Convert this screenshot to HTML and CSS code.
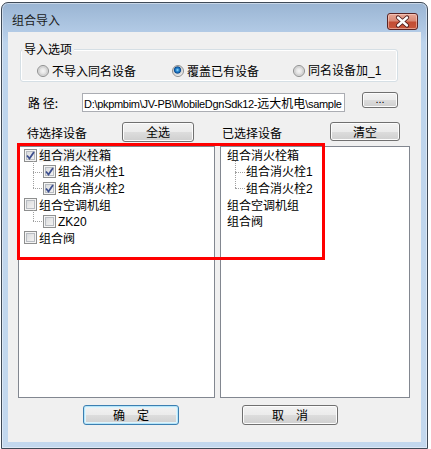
FILE: index.html
```html
<!DOCTYPE html>
<html lang="zh">
<head>
<meta charset="utf-8">
<title>组合导入</title>
<link rel="stylesheet" href="styles.css">
</head>
<body>
<div class="window">
  <div class="titlebar">
    <span class="title">组合导入</span>
    <span class="close">
      <svg width="31" height="17" viewBox="0 0 31 17">
        <path d="M11 4.5 L20 12.5 M20 4.5 L11 12.5" stroke="#4a1a1a" stroke-width="4.2" stroke-linecap="round"/>
        <path d="M11 4.5 L20 12.5 M20 4.5 L11 12.5" stroke="#ffffff" stroke-width="2.4" stroke-linecap="round"/>
      </svg>
    </span>
  </div>
  <div class="client">
    <div class="group">
      <div class="legend">导入选项</div>
      <div class="radios">
        <label class="radio"><span class="rb"></span><span>不导入同名设备</span></label>
        <label class="radio"><span class="rb on"></span><span>覆盖已有设备</span></label>
        <label class="radio"><span class="rb"></span><span>同名设备加<span class="num">_1</span></span></label>
      </div>
    </div>

    <div class="path-row">
      <span class="path-label">路 径:</span>
      <div class="path-field">D:\pkpmbim\JV-PB\MobileDgnSdk12-<span class="cjk">远大机电</span>\sample</div>
      <button class="btn dots">...</button>
    </div>

    <div class="lists">
      <div class="col col-left">
        <div class="col-head">
          <span class="head-label">待选择设备</span>
          <button class="btn btn-all">全选</button>
        </div>
        <div class="listbox tree-left">
          <div class="row"><span class="cb"><svg viewBox="0 0 13 13" width="13" height="13"><path d="M3 6.5 L5.5 9.5 L10 3" fill="none" stroke="#3d4f8f" stroke-width="1.8"/></svg></span><span class="txt hl">组合消火栓箱</span></div>
          <div class="row child"><span class="conn"></span><span class="cb"><svg viewBox="0 0 13 13" width="13" height="13"><path d="M3 6.5 L5.5 9.5 L10 3" fill="none" stroke="#3d4f8f" stroke-width="1.8"/></svg></span><span class="txt">组合消火栓<span class="num">1</span></span></div>
          <div class="row child last"><span class="conn"></span><span class="cb"><svg viewBox="0 0 13 13" width="13" height="13"><path d="M3 6.5 L5.5 9.5 L10 3" fill="none" stroke="#3d4f8f" stroke-width="1.8"/></svg></span><span class="txt">组合消火栓<span class="num">2</span></span></div>
          <div class="row"><span class="cb"></span><span class="txt">组合空调机组</span></div>
          <div class="row child last"><span class="conn"></span><span class="cb"></span><span class="txt"><span class="num">ZK20</span></span></div>
          <div class="row"><span class="cb"></span><span class="txt">组合阀</span></div>
        </div>
      </div>
      <div class="col col-right">
        <div class="col-head">
          <span class="head-label">已选择设备</span>
          <button class="btn btn-clear">清空</button>
        </div>
        <div class="listbox tree-right">
          <div class="row"><span class="txt">组合消火栓箱</span></div>
          <div class="row child"><span class="conn"></span><span class="txt">组合消火栓<span class="num">1</span></span></div>
          <div class="row child last"><span class="conn"></span><span class="txt">组合消火栓<span class="num">2</span></span></div>
          <div class="row"><span class="txt">组合空调机组</span></div>
          <div class="row"><span class="txt">组合阀</span></div>
        </div>
      </div>
    </div>

    <div class="red-mark"></div>

    <div class="footer">
      <button class="btn btn-ok">确　定</button>
      <button class="btn btn-cancel">取　消</button>
    </div>
  </div>
</div>
</body>
</html>
```

FILE: styles.css
```css
* { box-sizing: border-box; }

html, body {
  margin: 0;
  padding: 0;
  background: #ffffff;
}

body {
  font-family: "Noto Sans CJK SC", "Liberation Sans", sans-serif;
  font-size: 12px;
  color: #000;
  overflow: hidden;
}

.window {
  margin: 2px 0 0 1px;
  width: 427px;
  height: 447px;
  border: 1px solid #3f4a57;
  border-radius: 7px 7px 0 0;
  background: linear-gradient(to bottom, #9ab5d3 0px, #b3cbe6 30px, #bdd4ec 40px, #c3d8ee 100%);
  box-shadow: inset 0 0 0 1px rgba(255, 255, 255, 0.45);
  display: flex;
  flex-direction: column;
  padding: 0 6px 6px 6px;
}

.titlebar {
  height: 29px;
  display: flex;
  align-items: flex-start;
  justify-content: space-between;
  padding: 10px 3px 0 4px;
}

.title {
  line-height: 14px;
  font-size: 12px;
  color: #1b1b1b;
}

.close {
  display: block;
  width: 31px;
  height: 17px;
  border: 1px solid #5a2424;
  border-radius: 3px;
  background: linear-gradient(to bottom, #e8a796 0%, #d98a76 45%, #c24c33 55%, #c9573c 100%);
  box-shadow: inset 0 0 0 1px rgba(255, 220, 210, 0.5);
  position: relative;
}

.close svg {
  display: block;
  margin: -1px 0 0 -1px;
}

.client {
  flex: 1;
  background: #f0f0f0;
  position: relative;
  display: flex;
  flex-direction: column;
}

/* group box */
.group {
  margin: 17px 0 0 12px;
  width: 378px;
  height: 33px;
  border: 1px solid #d5dfe5;
  border-radius: 3px;
  box-shadow: inset 0 0 0 1px #ffffff;
}

.legend {
  margin: -8px 0 0 1px;
  padding: 0 2px;
  width: fit-content;
  background: #f0f0f0;
  line-height: 14px;
}

.radios {
  display: grid;
  grid-template-columns: 135px 121px auto;
  padding-left: 16px;
  margin-top: 7px;
  height: 14px;
}

.radio {
  display: flex;
  align-items: center;
  gap: 3px;
  line-height: 14px;
}

.rb {
  width: 12px;
  height: 12px;
  border-radius: 50%;
  border: 1px solid #8e8f8f;
  background: radial-gradient(circle at 50% 50%, #f6f6f6 0px, #e2e2e2 3px, #cfcfcf 4px, #f4f4f4 6px);
  flex: none;
}

.rb.on {
  background: radial-gradient(circle at 45% 40%, #a8e2ff 0px, #2c8ed6 1.5px, #0b4c93 3.2px, #cfcfcf 4px, #f4f4f4 6px);
}

.num {
  font-family: "Liberation Sans", sans-serif;
}

/* path row */
.path-row {
  display: flex;
  align-items: flex-start;
  margin: 11px 0 0 20px;
  height: 19px;
}

.path-label {
  width: 54px;
  line-height: 19px;
}

.path-field {
  width: 263px;
  height: 19px;
  border: 1px solid #abadb3;
  background: #fff;
  padding: 0 0 0 1px;
  line-height: 17px;
  font-family: "Liberation Sans", "Noto Sans CJK SC", sans-serif;
  font-size: 11px;
  white-space: nowrap;
  overflow: hidden;
  letter-spacing: -0.3px;
}

.path-field .cjk {
  font-family: "Noto Sans CJK SC", sans-serif;
  font-size: 12px;
  letter-spacing: 0;
}

.btn {
  font-family: "Noto Sans CJK SC", "Liberation Sans", sans-serif;
  font-size: 12px;
  color: #000;
  border: 1px solid #707070;
  border-radius: 3px;
  background: linear-gradient(to bottom, #f2f2f2 0%, #ebebeb 50%, #dddddd 50%, #cfcfcf 100%);
  box-shadow: inset 0 0 0 1px #fcfcfc;
  padding: 0;
  line-height: 16px;
  display: flex;
  align-items: center;
  justify-content: center;
}

.dots {
  width: 36px;
  height: 16px;
  margin: -1px 0 0 17px;
  line-height: 12px;
  font-family: "Liberation Sans", sans-serif;
  font-size: 11px;
  align-items: flex-end;
  padding-bottom: 2px;
}

/* lists */
.lists {
  display: grid;
  grid-template-columns: 197px 190px;
  column-gap: 5px;
  margin: 10px 0 0 10px;
}

.col {
  display: flex;
  flex-direction: column;
}

.col-head {
  height: 20px;
  display: flex;
  align-items: center;
}

.col-left .head-label {
  margin-left: 9px;
  width: 95px;
}

.col-right .head-label {
  margin-left: 2px;
  width: 108px;
}

.btn-all {
  width: 72px;
  height: 20px;
}

.btn-clear {
  width: 70px;
  height: 19px;
  align-self: flex-start;
}

.listbox {
  margin-top: 4px;
  height: 252px;
  border: 1px solid #828790;
  background: #fff;
}

.tree-left { padding: 0 0 0 5px; }
.tree-right { padding: 0 0 0 6px; }

.row {
  height: 16.5px;
  display: flex;
  align-items: center;
  line-height: 14px;
}

.row.child {
  padding-left: 9px;
}

.tree-right .row.child {
  padding-left: 8px;
}

.conn {
  width: 10px;
  height: 100%;
  position: relative;
  flex: none;
}

.tree-right .conn {
  width: 11px;
}

.conn::before {
  content: "";
  position: absolute;
  left: 0;
  top: -3px;
  bottom: 0;
  border-left: 1px dotted #a0a0a0;
}

.row.last .conn::before {
  bottom: 50%;
}

.conn::after {
  content: "";
  position: absolute;
  left: 0;
  right: 1px;
  top: 50%;
  border-top: 1px dotted #a0a0a0;
}

.cb {
  width: 13px;
  height: 13px;
  border: 1px solid #8e8f8f;
  background: linear-gradient(135deg, #d0d4d9 0%, #e8e8e8 50%, #f7f7f7 100%);
  box-shadow: inset 0 0 0 1px #f4f4f4, inset 0 0 0 2px #b8bcc2;
  flex: none;
  margin-right: 2px;
  position: relative;
}

.cb svg {
  display: block;
  margin: -1px 0 0 -1px;
}

.txt.hl {
  background: #f2f2f2;
}

/* red highlight overlay */
.red-mark {
  position: absolute;
  left: 9px;
  top: 111px;
  width: 308px;
  height: 117px;
  border: 3px solid #ff0000;
  pointer-events: none;
}

/* footer */
.footer {
  display: flex;
  margin: 7px 0 0 75px;
  gap: 63px;
}

.btn-ok, .btn-cancel {
  width: 96px;
  height: 20px;
}

.btn-ok {
  border-color: #3c7fb1;
  box-shadow: inset 0 0 0 1px #b6e5f9, inset 0 0 0 2px #e0f4fc;
}
```
